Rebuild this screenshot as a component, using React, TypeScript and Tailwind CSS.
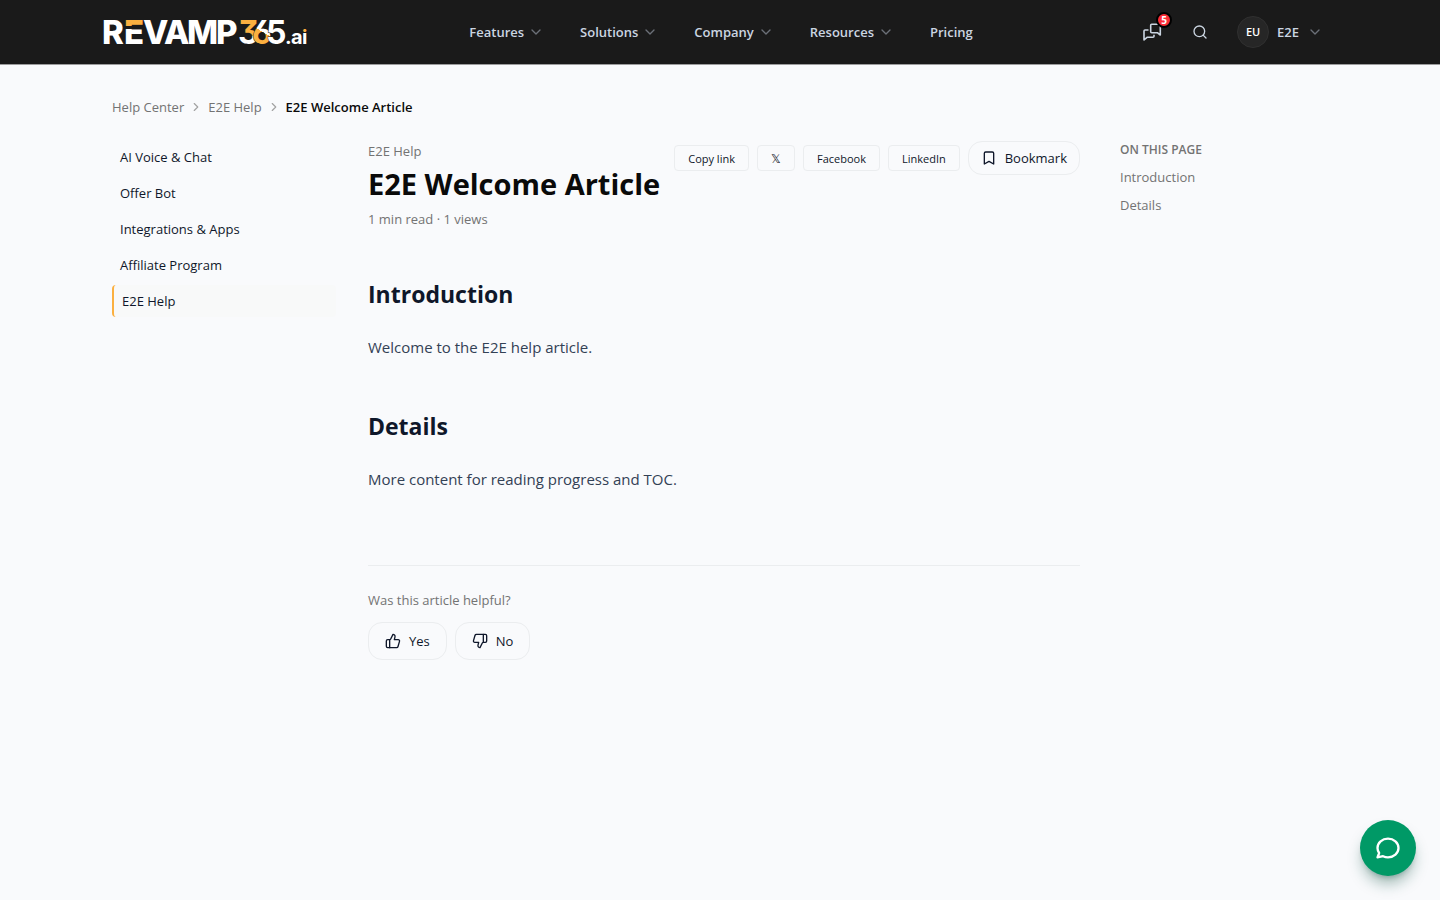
import type { ReactNode } from "react";
import { Bookmark, ChevronDown, ChevronRight, Search, ThumbsDown, ThumbsUp } from "lucide-react";

const menus = ["Features", "Solutions", "Company", "Resources"];
const topics = ["AI Voice & Chat", "Offer Bot", "Integrations & Apps", "Affiliate Program"];

function Logo() {
  return (
    <svg width="204" height="28" viewBox="0 0 204 28" role="img" aria-label="REVAMP365.ai" className="overflow-visible">
      <defs>
        <linearGradient id="barE" gradientUnits="userSpaceOnUse" x1="0" y1="0" x2="0" y2="28">
          <stop offset="0.29" stopColor="#fbb040" />
          <stop offset="0.29" stopColor="#1a1a1a" />
          <stop offset="0.38" stopColor="#1a1a1a" />
          <stop offset="0.38" stopColor="#fff" />
        </linearGradient>
        <linearGradient id="three" gradientUnits="userSpaceOnUse" x1="143" y1="0" x2="140" y2="28">
          <stop offset="0.62" stopColor="#fbb040" />
          <stop offset="0.62" stopColor="#fff" />
        </linearGradient>
        <linearGradient id="six" gradientUnits="userSpaceOnUse" x1="163" y1="5" x2="153" y2="22">
          <stop offset="0.5" stopColor="#fff" />
          <stop offset="0.5" stopColor="#fbb040" />
        </linearGradient>
        <linearGradient id="dotI" gradientUnits="userSpaceOnUse" x1="0" y1="0" x2="0" y2="28">
          <stop offset="0.53" stopColor="#fbb040" />
          <stop offset="0.53" stopColor="#fff" />
        </linearGradient>
      </defs>
      <g fontFamily="Inter, sans-serif" fontWeight="800" fill="#fff">
        <text y="26" fontSize="33">
          <tspan x="-2">R</tspan>
          <tspan x="20" fill="url(#barE)">E</tspan>
          <tspan x="39">V</tspan>
          <tspan x="60">A</tspan>
          <tspan x="83">M</tspan>
          <tspan x="112">P</tspan>
        </text>
        <text y="26" fontSize="32" fontWeight="700" stroke="#1a1a1a" strokeWidth="1" paintOrder="stroke" className="[font-feature-settings:'cv03','cv09']">
          <tspan x="134" fill="url(#three)">3</tspan>
          <tspan x="148" fill="url(#six)">6</tspan>
          <tspan x="162">5</tspan>
        </text>
        <text y="26" fontSize="20" fontWeight="700">
          <tspan x="181">.</tspan>
          <tspan x="187">a</tspan>
          <tspan x="198" fill="url(#dotI)">i</tspan>
        </text>
      </g>
    </svg>
  );
}

function ChatIcon() {
  return (
    <svg width="20" height="20" viewBox="0 0 20 20" fill="none" stroke="currentColor" strokeWidth="1.6" strokeLinejoin="round" aria-hidden="true">
      <path d="M9.700 10.700a1 1 0 0 1-1-1V3.300a1 1 0 0 1 1-1h7.600a1 1 0 0 1 1 1V13l-3-2.300z" />
      <path d="M6.500 8H3a1 1 0 0 0-1 1v9l3-2.700h6a1 1 0 0 0 1-1v-1.500" />
    </svg>
  );
}

function BubbleIcon() {
  return (
    <svg width="28" height="28" viewBox="0 0 24 24" fill="none" stroke="currentColor" strokeWidth="2" strokeLinecap="round" strokeLinejoin="round" aria-hidden="true">
      <path d="M21 12c0 4.418-4.03 8-9 8a9.863 9.863 0 01-4.255-.949L3 20l1.395-3.720C3.512 15.042 3 13.574 3 12c0-4.418 4.030-8 9-8s9 3.582 9 8z" />
    </svg>
  );
}

function ShareButton({ children }: { children: ReactNode }) {
  return (
    <button type="button" className="h-[26px] rounded border border-[#ebedef] px-[13px] pt-px text-[11px] leading-4">
      {children}
    </button>
  );
}

export default function App() {
  return (
    <div className="min-h-screen bg-[#f9fafc] font-['Open_Sans','Noto_Sans',sans-serif] text-[13px] leading-5 text-[#0f172a]">
      <header className="border-b border-[#9c9c9d] bg-[#1a1a1a]">
        <div className="mx-auto flex h-16 max-w-7xl items-center justify-between px-6">
          <a href="#home"><Logo /></a>
          <nav aria-label="Main" className="mr-2 flex items-center gap-9 font-semibold text-[#cbd5e1]">
            {menus.map((m) => (
              <button key={m} type="button" className="flex items-center gap-1">
                {m}
                <ChevronDown size={16} strokeWidth={2} className="text-[#6b7078]" />
              </button>
            ))}
            <a href="#pricing">Pricing</a>
          </nav>
          <div className="flex items-center text-[#cbd5e1]">
            <button type="button" aria-label="Messages" className="relative mr-[30px]">
              <ChatIcon />
              <span className="absolute -top-[10px] -right-[10px] flex size-4 items-center justify-center rounded-full border-2 border-black bg-[#fb2c36] text-[10px] leading-3 font-bold text-white">5</span>
            </button>
            <button type="button" aria-label="Search" className="mr-[29px]"><Search size={16} strokeWidth={2} /></button>
            <button type="button" className="flex items-center gap-2 pr-[13px] font-semibold">
              <span className="flex size-8 items-center justify-center rounded-full border border-[#303030] bg-[#262626] text-[11px] text-white">EU</span>
              E2E
              <ChevronDown size={16} strokeWidth={2} className="text-[#6b7078]" />
            </button>
          </div>
        </div>
      </header>

      <main className="mx-auto max-w-7xl px-8 pt-8">
        <nav aria-label="Breadcrumb" className="mb-6 flex items-center gap-[5px] text-[#737373]">
          <a href="#help">Help Center</a>
          <ChevronRight size={14} className="text-[#a3a3a3]" />
          <a href="#e2e">E2E Help</a>
          <ChevronRight size={14} className="text-[#a3a3a3]" />
          <span className="font-semibold text-[#0a0a0a]">E2E Welcome Article</span>
        </nav>

        <div className="flex gap-8">
          <nav aria-label="Topics" className="flex w-56 shrink-0 flex-col gap-1">
            {topics.map((t) => (
              <a key={t} href="#topic" className="px-2 py-1.5">{t}</a>
            ))}
            <a href="#e2e" aria-current="page" className="rounded border-l-2 border-[#fbb040] bg-[#f8f9f9] px-2 py-1.5">E2E Help</a>
          </nav>

          <article className="min-w-0 flex-1">
            <div className="flex items-start justify-between gap-3">
              <div className="text-[#737373]">
                <p>E2E Help</p>
                <h1 className="mt-[5px] text-[29px] leading-9 font-bold whitespace-nowrap text-[#0a0a0a]">E2E Welcome Article</h1>
                <p className="mt-[7px]">1 min read · 1 views</p>
              </div>
              <div className="flex shrink-0 items-center gap-2">
                <ShareButton>Copy link</ShareButton>
                <ShareButton><span className="text-[12px]">𝕏</span></ShareButton>
                <ShareButton>Facebook</ShareButton>
                <ShareButton>LinkedIn</ShareButton>
                <button type="button" className="flex h-[34px] items-center gap-2 rounded-[14px] border border-[#ebedef] px-3">
                  <Bookmark size={16} />
                  Bookmark
                </button>
              </div>
            </div>

            <section className="mt-12">
              <h2 id="introduction" className="text-[23px] leading-[34px] font-bold">Introduction</h2>
              <p className="mt-[22px] text-[15px] leading-7 text-[#334155]">Welcome to the E2E help article.</p>
            </section>
            <section className="mt-12">
              <h2 id="details" className="text-[23px] leading-[34px] font-bold">Details</h2>
              <p className="mt-[22px] text-[15px] leading-7 text-[#334155]">More content for reading progress and TOC.</p>
            </section>

            <section className="mt-[72px] border-t border-[#ebedef] pt-6">
              <p className="text-[#737373]">Was this article helpful?</p>
              <div className="mt-3 flex gap-2">
                <button type="button" className="flex h-[38px] items-center gap-2 rounded-[14px] border border-[#ebedef] px-4">
                  <ThumbsUp size={16} />
                  Yes
                </button>
                <button type="button" className="flex h-[38px] items-center gap-2 rounded-[14px] border border-[#ebedef] px-4">
                  <ThumbsDown size={16} />
                  No
                </button>
              </div>
            </section>
          </article>

          <aside className="w-[216px] shrink-0 pl-2 text-[#737373]">
            <h2 className="text-[12px] leading-[18px] font-semibold">ON THIS PAGE</h2>
            <ul className="mt-2 space-y-2">
              <li><a href="#introduction">Introduction</a></li>
              <li><a href="#details">Details</a></li>
            </ul>
          </aside>
        </div>
      </main>

      <button type="button" aria-label="Open chat" className="fixed right-6 bottom-6 flex size-14 items-center justify-center rounded-full bg-[#009966] text-white shadow-lg shadow-[#0f5040]/40">
        <BubbleIcon />
      </button>
    </div>
  );
}
